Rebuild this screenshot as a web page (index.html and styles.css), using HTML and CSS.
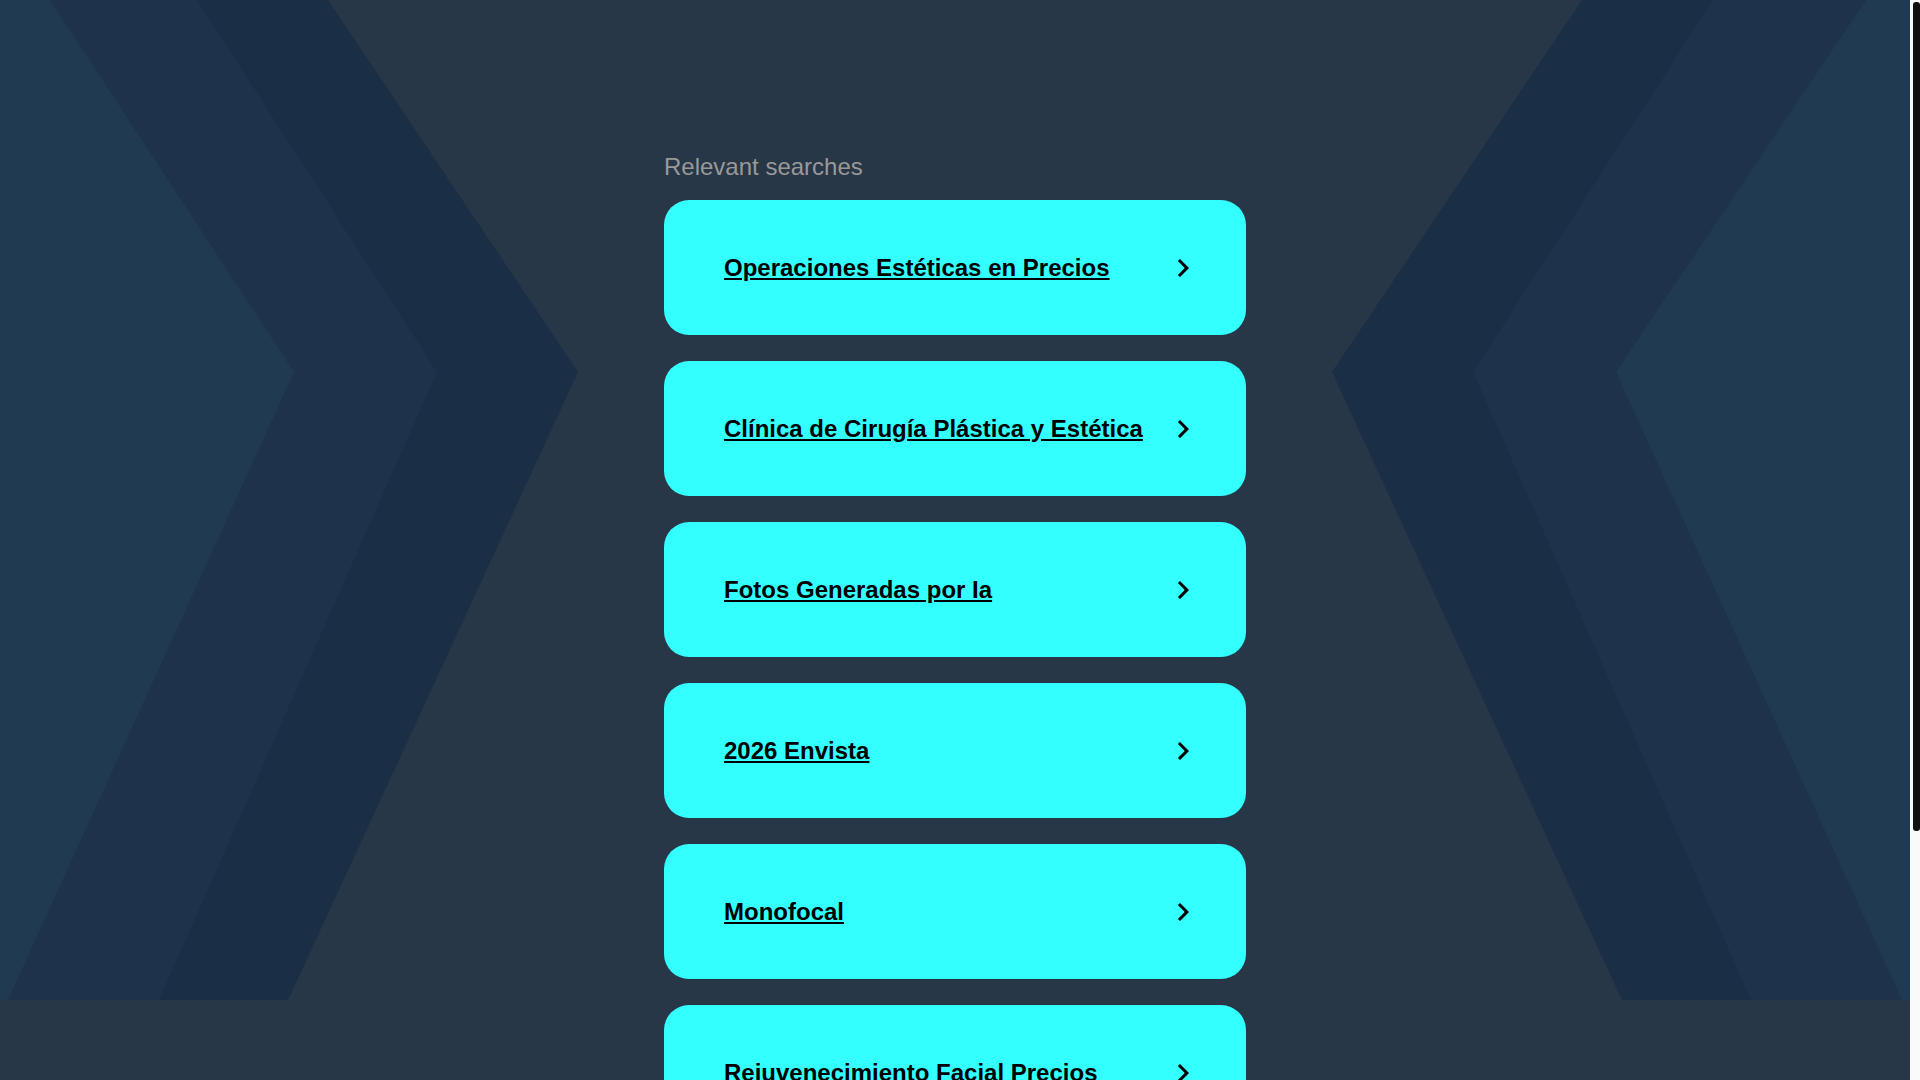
FILE: index.html
```html
<!DOCTYPE html>
<html lang="en">
<head>
<meta charset="utf-8">
<title>Relevant searches</title>
<link rel="stylesheet" href="styles.css">
</head>
<body>
<div class="canvas">
  <div class="backdrop" aria-hidden="true">
    <svg class="backdrop-art" viewBox="0 0 1910 1000" preserveAspectRatio="none">
      <polygon class="band-dark" points="0,0 328,0 578,372 288,1000 0,1000"/>
      <polygon class="band-mid" points="0,0 197,0 437,372 159,1000 0,1000"/>
      <polygon class="band-light" points="0,0 50,0 294,372 8,1000 0,1000"/>
      <polygon class="band-dark" points="1910,0 1582,0 1332,372 1622,1000 1910,1000"/>
      <polygon class="band-mid" points="1910,0 1713,0 1473,372 1751,1000 1910,1000"/>
      <polygon class="band-light" points="1910,0 1866,0 1616,372 1902,1000 1910,1000"/>
    </svg>
  </div>
  <main class="page">
    <section class="searches">
      <h2 class="searches-title">Relevant searches</h2>
      <ul class="search-list">
        <li><a class="search-card" href="#"><span class="search-label">Operaciones Estéticas en Precios</span><svg class="chev" viewBox="0 0 24 24"><path d="M10 6 8.59 7.41 13.17 12l-4.58 4.59L10 18l6-6z"/></svg></a></li>
        <li><a class="search-card" href="#"><span class="search-label">Clínica de Cirugía Plástica y Estética</span><svg class="chev" viewBox="0 0 24 24"><path d="M10 6 8.59 7.41 13.17 12l-4.58 4.59L10 18l6-6z"/></svg></a></li>
        <li><a class="search-card" href="#"><span class="search-label">Fotos Generadas por Ia</span><svg class="chev" viewBox="0 0 24 24"><path d="M10 6 8.59 7.41 13.17 12l-4.58 4.59L10 18l6-6z"/></svg></a></li>
        <li><a class="search-card" href="#"><span class="search-label">2026 Envista</span><svg class="chev" viewBox="0 0 24 24"><path d="M10 6 8.59 7.41 13.17 12l-4.58 4.59L10 18l6-6z"/></svg></a></li>
        <li><a class="search-card" href="#"><span class="search-label">Monofocal</span><svg class="chev" viewBox="0 0 24 24"><path d="M10 6 8.59 7.41 13.17 12l-4.58 4.59L10 18l6-6z"/></svg></a></li>
        <li><a class="search-card" href="#"><span class="search-label">Rejuvenecimiento Facial Precios</span><svg class="chev" viewBox="0 0 24 24"><path d="M10 6 8.59 7.41 13.17 12l-4.58 4.59L10 18l6-6z"/></svg></a></li>
      </ul>
    </section>
  </main>
</div>
<div class="scrollbar" aria-hidden="true"><div class="scrollbar-thumb"></div></div>
</body>
</html>
```
FILE: styles.css
```css
html {
  background: #273747;
}
body {
  margin: 0 10px 0 0;
  background: #273747;
  font-family: "Liberation Sans", Arial, sans-serif;
}
.canvas {
  position: relative;
}
.backdrop {
  position: absolute;
  top: 0;
  left: 0;
  width: 100%;
  height: 1000px;
  z-index: 0;
  overflow: hidden;
}
.backdrop-art {
  display: block;
  width: 100%;
  height: 100%;
}
.band-dark { fill: #1a2f45; }
.band-mid { fill: #1e334b; }
.band-light { fill: #203a51; }
.page {
  position: relative;
  z-index: 1;
  display: flex;
  justify-content: center;
  padding: 153px 0 263px;
}
.searches {
  width: 582px;
}
.searches-title {
  margin: 0 0 19px;
  font-size: 24px;
  line-height: 28px;
  font-weight: normal;
  color: #999;
}
.search-list {
  list-style: none;
  margin: 0;
  padding: 0;
  display: flex;
  flex-direction: column;
  gap: 26px;
}
.search-card {
  box-sizing: border-box;
  height: 135px;
  display: flex;
  align-items: center;
  justify-content: space-between;
  padding: 0 45px 0 60px;
  background: #33ffff;
  border-radius: 25px;
  color: #000;
  text-decoration: none;
}
.search-label {
  font-size: 24px;
  font-weight: bold;
  line-height: 28px;
  text-decoration: underline;
  white-space: nowrap;
}
.chev {
  width: 36px;
  height: 36px;
  flex: none;
  fill: #000;
}
.scrollbar {
  position: fixed;
  top: 0;
  right: 0;
  bottom: 0;
  width: 10px;
  background: #fafafa;
  z-index: 5;
}
.scrollbar-thumb {
  margin: 2px 0 0 3px;
  height: 829px;
  background: #111;
  border-radius: 3px;
}
```
